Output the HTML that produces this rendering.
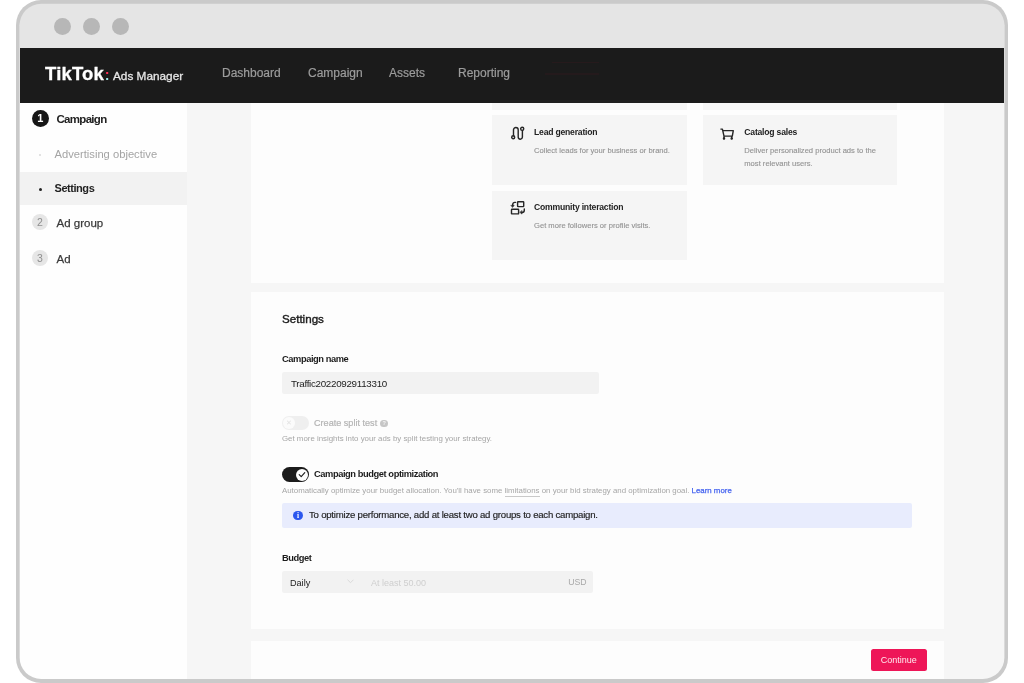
<!DOCTYPE html>
<html lang="en">
<head>
<meta charset="utf-8">
<title>TikTok Ads Manager</title>
<style>
*{box-sizing:border-box;margin:0;padding:0}
html,body{width:1024px;height:683px;overflow:hidden;background:#fff}
body{font-family:"Liberation Sans",sans-serif;position:relative;color:#1c1c1c}
.frame{position:absolute;left:15.7px;top:0.2px;width:992.6px;height:682.4px;border-radius:25px;background:#cacaca}
.clip{position:absolute;left:0;top:0;width:1024px;height:683px;clip-path:inset(3.8px 19.6px 4px 19.6px round 21.5px)}
.inner{position:absolute;left:0;top:0;width:1024px;height:683px;background:#f6f6f6;filter:blur(0.45px)}
.abs{position:absolute}
.titlebar{left:20px;top:0;width:984px;height:48.3px;background:#e5e5e5}
.dot{width:17px;height:17px;border-radius:50%;background:#b7b7b7;top:17.5px}
.nav{left:20px;top:48.1px;width:984px;height:55px;background:#1b1b1b}
.logo{left:45px;top:63px;font-weight:bold;font-size:18.5px;color:#fff;letter-spacing:0.2px;-webkit-text-stroke:0.3px #fff;line-height:22px;white-space:nowrap}
.ads{left:113px;top:69px;font-size:11.8px;color:#e6e6e6;-webkit-text-stroke:0.3px #e6e6e6;line-height:14px;white-space:nowrap}
.navi{top:66px;font-size:12px;color:#9c9c9c;-webkit-text-stroke:0.2px #9c9c9c;line-height:14px;white-space:nowrap}
.side{left:20px;top:103px;width:167px;height:580px;background:#fefefe}
.sel{left:20px;top:172.3px;width:167px;height:33px;background:#f2f2f2}
.num{width:16px;height:16px;border-radius:50%;font-size:10.5px;line-height:16px;text-align:center}
.st{font-size:11.5px;line-height:14px;white-space:nowrap}
.card{background:#fdfdfd;left:251px;width:692.6px}
.tile{background:#f5f5f5}
.tt{font-weight:bold;font-size:8.6px;line-height:10px;color:#222;white-space:nowrap;letter-spacing:-0.2px}
.td{font-size:7.6px;line-height:12.8px;color:#939393;-webkit-text-stroke:0.12px #939393;white-space:nowrap}
.lbl{font-weight:bold;font-size:9.3px;line-height:11px;color:#1c1c1c;white-space:nowrap;letter-spacing:-0.42px}
.sm{font-size:7.86px;line-height:9px;color:#a6a6a6;white-space:nowrap}
</style>
</head>
<body>
<div class="frame"></div>
<div class="clip"><div class="inner">
  <div class="abs titlebar"></div>
  <div class="abs dot" style="left:53.5px"></div>
  <div class="abs dot" style="left:82.5px"></div>
  <div class="abs dot" style="left:111.5px"></div>

  <div class="abs nav"></div>
  <div class="abs logo">TikTok<span style="color:transparent;background:linear-gradient(#fe2c55 0 58%,#9fe8ea 58%);-webkit-background-clip:text;background-clip:text;font-size:14.5px;letter-spacing:0;position:relative;top:-0.5px;left:0.6px;-webkit-text-stroke:0">:</span></div>
  <div class="abs ads">Ads Manager</div>
  <div class="abs navi" style="left:222px">Dashboard</div>
  <div class="abs navi" style="left:308px">Campaign</div>
  <div class="abs navi" style="left:389px">Assets</div>
  <div class="abs navi" style="left:458px">Reporting</div>

  <div class="abs" style="left:552px;top:62px;width:47px;height:1px;background:rgba(150,20,45,.09)"></div>
  <div class="abs" style="left:545px;top:73px;width:54px;height:1.5px;background:rgba(150,20,45,.08)"></div>

  <!-- sidebar -->
  <div class="abs side"></div>
  <div class="abs sel"></div>
  <div class="abs num" style="left:31.9px;top:110.2px;width:16.8px;height:16.8px;line-height:16.8px;background:#161616;color:#fff;font-weight:bold;font-size:11px">1</div>
  <div class="abs st" style="left:56.5px;top:112px;font-weight:bold;color:#222;letter-spacing:-0.7px">Campaign</div>
  <div class="abs" style="left:39px;top:153.5px;width:2px;height:2px;border-radius:50%;background:#d8d8d8"></div>
  <div class="abs st" style="left:54.5px;top:147.3px;color:#a4a4a4;font-size:11.2px">Advertising objective</div>
  <div class="abs" style="left:38.5px;top:187.5px;width:3px;height:3px;border-radius:50%;background:#222"></div>
  <div class="abs st" style="left:54.5px;top:181px;font-weight:bold;color:#222;letter-spacing:-0.45px;font-size:11px">Settings</div>
  <div class="abs num" style="left:32px;top:214px;background:#e6e6e6;color:#8f8f8f">2</div>
  <div class="abs st" style="left:56.5px;top:215.5px;color:#3a3a3a;-webkit-text-stroke:0.25px #3a3a3a">Ad group</div>
  <div class="abs num" style="left:32px;top:250px;background:#e6e6e6;color:#8f8f8f">3</div>
  <div class="abs st" style="left:56.5px;top:251.5px;color:#3a3a3a;-webkit-text-stroke:0.25px #3a3a3a">Ad</div>

  <!-- card 1 -->
  <div class="abs card" style="top:103px;height:180.2px"></div>
  <div class="abs tile" style="left:492px;top:103px;width:194.5px;height:7px"></div>
  <div class="abs tile" style="left:702.7px;top:103px;width:194.5px;height:7px"></div>
  <div class="abs tile" style="left:492px;top:115.2px;width:194.5px;height:69.8px"></div>
  <div class="abs tile" style="left:702.7px;top:115.2px;width:194.5px;height:69.8px"></div>
  <div class="abs tile" style="left:492px;top:190.8px;width:194.5px;height:69.5px"></div>

  <svg class="abs" style="left:510px;top:126px" width="15" height="15" viewBox="0 0 15 15" fill="none" stroke="#262626" stroke-width="1.42" stroke-linecap="round" stroke-linejoin="round">
    <circle cx="3.2" cy="11.3" r="1.5"/><circle cx="12.2" cy="2.8" r="1.55"/>
    <path d="M3.5 9.8V3.8a2.35 2.35 0 0 1 4.7 0v7.3a2.1 2.1 0 0 0 4.2 0V4.4"/>
  </svg>
  <div class="abs tt" style="left:534px;top:127.4px">Lead generation</div>
  <div class="abs td" style="left:534px;top:144.8px">Collect leads for your business or brand.</div>

  <svg class="abs" style="left:720px;top:127.5px" width="14" height="12" viewBox="0 0 14 12" fill="none" stroke="#262626" stroke-width="1.42" stroke-linecap="round" stroke-linejoin="round">
    <path d="M0.9 1.1h1.5l1.6 7h8.3M2.9 2.6h10.4l-1 5.5M4 8.1v2.4M11.7 8.1v2.4"/>
    <circle cx="4" cy="10.6" r=".55" fill="#2a2a2a"/><circle cx="11.7" cy="10.6" r=".55" fill="#2a2a2a"/>
  </svg>
  <div class="abs tt" style="left:744.3px;top:127.4px">Catalog sales</div>
  <div class="abs td" style="left:744.3px;top:144.8px">Deliver personalized product ads to the<br>most relevant users.</div>

  <svg class="abs" style="left:510px;top:200px" width="16" height="16" viewBox="0 0 16 16" fill="none" stroke="#262626" stroke-width="1.42" stroke-linecap="round" stroke-linejoin="round">
    <rect x="7.6" y="1.8" width="6.1" height="4.8" rx=".5"/>
    <rect x="1.5" y="9.3" width="7.1" height="4.6" rx=".5"/>
    <path d="M5.6 2.4H4.7a2 2 0 0 0-2 2v1.4"/><path d="M1.2 5.3h3l-1.5 1.9z" fill="#2a2a2a" stroke-width=".6"/>
    <path d="M14.3 9v1.3a2.2 2.2 0 0 1-2.2 2.2h-.4"/><path d="M12 10.9v3.2l-2-1.6z" fill="#2a2a2a" stroke-width=".6"/>
  </svg>
  <div class="abs tt" style="left:534px;top:202.4px">Community interaction</div>
  <div class="abs td" style="left:534px;top:219.8px">Get more followers or profile visits.</div>

  <!-- card 2 -->
  <div class="abs card" style="top:292px;height:337.3px"></div>
  <div class="abs" style="left:282px;top:312px;font-size:11.6px;line-height:14px;color:#1c1c1c;-webkit-text-stroke:0.4px #1c1c1c;white-space:nowrap">Settings</div>
  <div class="abs lbl" style="left:282px;top:353.7px">Campaign name</div>
  <div class="abs" style="left:282px;top:371.5px;width:317px;height:22.3px;background:#f2f2f2;border-radius:2px"></div>
  <div class="abs" style="left:291px;top:377.6px;font-size:9.8px;letter-spacing:-0.3px;line-height:11px;color:#222;white-space:nowrap">Traffic20220929113310</div>

  <!-- toggle off -->
  <div class="abs" style="left:282px;top:415.7px;width:26.5px;height:14.5px;border-radius:8px;background:#efefef"></div>
  <div class="abs" style="left:283.2px;top:416.9px;width:12px;height:12px;border-radius:50%;background:#fbfbfb;color:#e2e2e2;font-size:7px;line-height:12px;text-align:center">✕</div>
  <div class="abs" style="left:314px;top:417.5px;font-size:9.1px;line-height:11px;color:#b4b4b4;-webkit-text-stroke:0.2px #b4b4b4;white-space:nowrap">Create split test</div>
  <div class="abs" style="left:380.4px;top:419.6px;width:7.5px;height:7.5px;border-radius:50%;background:#c6c6c6;color:#f4f4f4;font-size:5.5px;line-height:7.5px;text-align:center;font-weight:bold">?</div>
  <div class="abs sm" style="left:282px;top:434px">Get more insights into your ads by split testing your strategy.</div>

  <!-- toggle on -->
  <div class="abs" style="left:282px;top:467.2px;width:26.7px;height:14.6px;border-radius:8px;background:#1b1b1b"></div>
  <div class="abs" style="left:295.8px;top:468.5px;width:12px;height:12px;border-radius:50%;background:#fdfdfd"></div>
  <svg class="abs" style="left:298px;top:471px" width="8" height="7" viewBox="0 0 8 7" fill="none" stroke="#1b1b1b" stroke-width="1.1" stroke-linecap="round" stroke-linejoin="round"><path d="M1.2 3.6l2 2L6.8 1.6"/></svg>
  <div class="abs lbl" style="left:314px;top:468.5px">Campaign budget optimization</div>
  <div class="abs sm" style="left:282px;top:485.7px">Automatically optimize your budget allocation. You'll have some <span style="border-bottom:1px solid #c9c9c9;padding-bottom:1px">limitations</span> on your bid strategy and optimization goal. <span style="color:#4463f0;-webkit-text-stroke:0.25px #4463f0">Learn more</span></div>

  <!-- banner -->
  <div class="abs" style="left:282px;top:503px;width:630px;height:24.9px;background:#e8ecfd;border-radius:2px"></div>
  <div class="abs" style="left:293.2px;top:510.9px;width:9.6px;height:9.6px;border-radius:50%;background:#2b57ee;color:#fff;font-size:7.5px;line-height:9.6px;text-align:center;font-weight:bold;font-family:'Liberation Serif',serif">i</div>
  <div class="abs" style="left:309px;top:508.8px;font-size:9.6px;letter-spacing:-0.22px;line-height:12px;color:#222;-webkit-text-stroke:0.15px #222;white-space:nowrap">To optimize performance, add at least two ad groups to each campaign.</div>

  <div class="abs lbl" style="left:282px;top:553.4px">Budget</div>
  <div class="abs" style="left:282px;top:571.3px;width:311px;height:22.2px;background:#f2f2f2;border-radius:2px"></div>
  <div class="abs" style="left:290px;top:576.5px;font-size:9.1px;line-height:12px;color:#222;white-space:nowrap">Daily</div>
  <svg class="abs" style="left:347.4px;top:578.8px" width="7" height="5" viewBox="0 0 7 5" fill="none" stroke="#d6d6d6" stroke-width="0.9" stroke-linecap="round" stroke-linejoin="round"><path d="M.8 1l2.7 2.7L6.2 1"/></svg>
  <div class="abs" style="left:371px;top:578px;font-size:9px;line-height:11px;color:#cfcfcf;white-space:nowrap">At least 50.00</div>
  <div class="abs" style="left:568.3px;top:577.2px;font-size:8.7px;line-height:11px;color:#a8a8a8;white-space:nowrap">USD</div>

  <!-- card 3 -->
  <div class="abs card" style="top:641.3px;height:45px"></div>
  <div class="abs" style="left:870.6px;top:648.9px;width:56.5px;height:21.9px;background:#ee1658;border-radius:2.5px;color:#ffe9ee;font-size:9px;line-height:22px;text-align:center">Continue</div>
</div></div>
</body>
</html>
